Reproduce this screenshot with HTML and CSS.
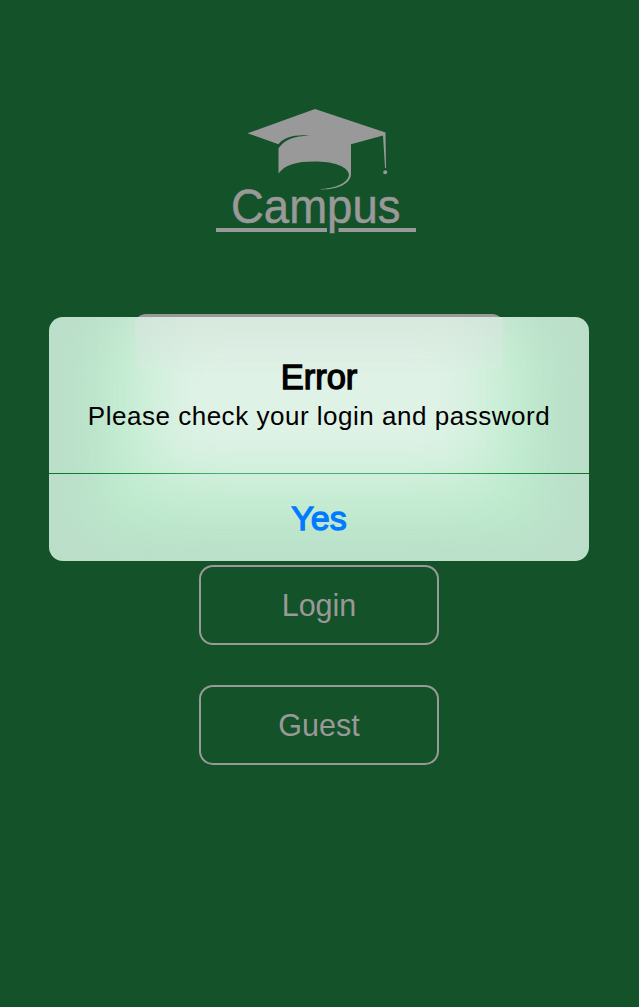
FILE: index.html
```html
<!DOCTYPE html>
<html lang="en">
<head>
<meta charset="utf-8">
<title>Campus</title>
<link rel="stylesheet" href="styles.css">
</head>
<body>
<main class="screen">
  <svg class="logo" viewBox="205 100 220 140" role="img" aria-label="Campus">
    <path d="M247.500 133.300 315 109 385.500 132.500 386 168 385 168 383 135.500 351 144.300V174C351 184 336 190.500 318 189.300C337 188.500 347.500 183 349 175C348 166 333 161.500 314 161.500C297 161.500 285 164.500 278.500 173.500V148.200C285 139 294 136.300 309 135.400C294 134.400 284 137 278.500 144.200Z"/>
    <circle cx="385.200" cy="172.200" r="2"/>
    <path d="M216 228H327V232H216ZM338.500 228H416V232H338.500Z"/>
    <text class="logo-text" x="231" y="222.800" textLength="169.500" lengthAdjust="spacingAndGlyphs">Campus</text>
  </svg>
  <div class="fields"></div>
  <div class="actions">
    <button class="action">Login</button>
    <button class="action">Guest</button>
  </div>
</main>
<section class="alert" role="alertdialog">
  <div class="glass"><div class="glow"></div><div class="panel"></div><div class="field-haze"></div></div>
  <div class="alert-body">
    <h1 class="title">Error</h1>
    <p class="message">Please check your login and password</p>
  </div>
  <div class="divider"></div>
  <button class="confirm">Yes</button>
</section>
</body>
</html>
```
FILE: styles.css
```css
* { box-sizing: border-box; }
body { margin: 0; background: #145229; font-family: "Liberation Sans", Arial, sans-serif; }
button { font-family: inherit; padding: 0; background: none; }
.screen {
  height: 1007px;
  padding: 100px 1px 0 0;
  display: flex;
  flex-direction: column;
  align-items: center;
  overflow: hidden;
}
.logo { width: 220px; height: 140px; margin-right: 8px; fill: #999; flex: none; overflow: visible; }
.logo-text { font-size: 47.500px; stroke: #999; stroke-width: .5px; }
.fields { width: 370px; height: 156px; margin-top: 74px; border-radius: 12px; background: #999; flex: none; }
.actions { margin-top: 95px; display: flex; flex-direction: column; gap: 40px; }
.action {
  width: 240px;
  height: 80px;
  border: 2px solid #999;
  border-radius: 14px;
  color: #999;
  font-size: 30.500px;
  line-height: 36px;
}
.alert {
  position: absolute;
  left: 49px;
  top: 317px;
  width: 540px;
  height: 244px;
  border-radius: 14px;
  overflow: hidden;
  background: #bcdfca;
  text-align: center;
}
.glass { position: absolute; inset: 0; }
.glow { position: absolute; inset: 10px 45px 30px; background: #bbebcc; filter: blur(25px); }
.panel { position: absolute; inset: -15px 95px 80px; background: #dff2e6; filter: blur(34px); }
.field-haze {
  position: absolute;
  left: 86px;
  top: 0;
  width: 368px;
  height: 54px;
  border-radius: 0 0 10px 10px;
  background: linear-gradient(rgba(218, 229, 222, .6), rgba(224, 236, 229, .2));
  filter: blur(1px);
}
.alert-body { position: relative; height: 156px; padding-top: 40px; }
.divider { position: relative; height: 1px; background: linear-gradient(90deg, #0b7526, #129040 15%, #48b174 32%, #48b174 68%, #129040 85%, #0b7526); }
.title { margin: 0; font-size: 34.500px; font-weight: 400; line-height: 40px; -webkit-text-stroke: 1.300px #000; }
.message { margin: 3px 0 0; font-size: 26px; line-height: 32px; letter-spacing: .52px; white-space: nowrap; }
.confirm {
  position: relative;
  display: block;
  width: 100%;
  height: 87px;
  border: 0;
  padding-top: 1px;
  color: #007aff;
  font-size: 34px;
  -webkit-text-stroke: 1.300px #007aff;
}
```
